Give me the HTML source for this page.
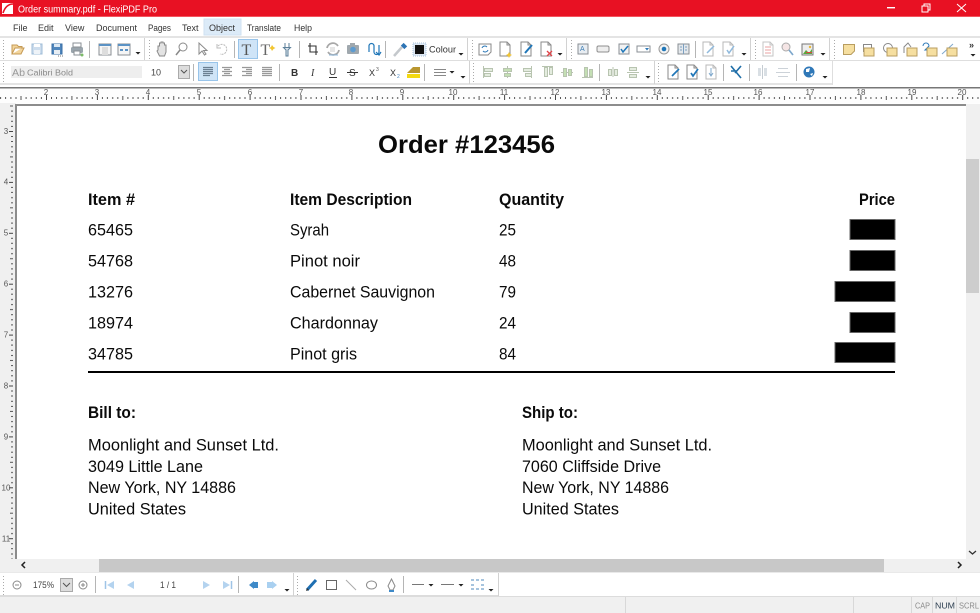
<!DOCTYPE html>
<html><head><meta charset="utf-8"><style>
html,body{margin:0;padding:0;background:#fff}
#a{position:relative;width:980px;height:613px;overflow:hidden;background:#fff;font-family:"Liberation Sans",sans-serif}
svg{position:absolute;left:0;top:0}
.ui{font-family:"Liberation Sans",sans-serif;font-size:9px;fill:#333}
.doc{font-family:"Liberation Sans",sans-serif;font-size:16.5px;fill:#0a0a0a}
.b{font-weight:bold}
.r{font-family:"Liberation Sans",sans-serif;font-size:8px;fill:#555}
.g{fill:none;stroke:#8a8a8a;stroke-width:1}
.m{fill:none;stroke:#1f76b8;stroke-width:1.2}
.y{fill:#f6dfa0;stroke:#b89d60;stroke-width:1}
</style></head><body><div id="a">
<svg width="980" height="613" viewBox="0 0 980 613">
<defs>
<pattern id="hr" x="46" y="94" width="50.9" height="9" patternUnits="userSpaceOnUse">
<rect x="0" y="1" width="1" height="5" fill="#444"/><rect x="5" y="3" width="1" height="2" fill="#555"/><rect x="10" y="3" width="1" height="2" fill="#555"/><rect x="15.3" y="3" width="1" height="2" fill="#555"/><rect x="20.4" y="3" width="1" height="2" fill="#555"/><rect x="25.4" y="2" width="1" height="4" fill="#555"/><rect x="30.5" y="3" width="1" height="2" fill="#555"/><rect x="35.6" y="3" width="1" height="2" fill="#555"/><rect x="40.7" y="3" width="1" height="2" fill="#555"/><rect x="45.8" y="3" width="1" height="2" fill="#555"/>
</pattern>
<pattern id="vr" x="8" y="131" width="7" height="50.9" patternUnits="userSpaceOnUse">
<rect x="1" y="0" width="4" height="1" fill="#444"/><rect x="3" y="5" width="2" height="1" fill="#555"/><rect x="3" y="10" width="2" height="1" fill="#555"/><rect x="3" y="15.3" width="2" height="1" fill="#555"/><rect x="3" y="20.4" width="2" height="1" fill="#555"/><rect x="2" y="25.4" width="3" height="1" fill="#555"/><rect x="3" y="30.5" width="2" height="1" fill="#555"/><rect x="3" y="35.6" width="2" height="1" fill="#555"/><rect x="3" y="40.7" width="2" height="1" fill="#555"/><rect x="3" y="45.8" width="2" height="1" fill="#555"/>
</pattern>
<g id="doc"><path class="g" d="M-5 -7H2L5 -4V7H-5Z"/><path class="g" d="M2 -7V-4H5"/></g>
<g id="grip"><path d="M0 -9V10" stroke="#aaa" stroke-width="1" stroke-dasharray="1 2"/></g>
<g id="arr"><path d="M-2.500 0H2.500L0 2.500Z" fill="#222"/></g>
<g id="note"><rect x="-5" y="-2" width="10" height="8" class="y"/></g>
</defs>

<!-- title bar -->
<rect width="980" height="16" fill="#e81123"/>
<rect y="16" width="980" height="1" fill="#f4555f"/>
<rect x="2" y="3" width="11" height="11" fill="#fff"/>
<path d="M3 13C5 7 8 4 13 4" stroke="#e81123" stroke-width="1.600" fill="none"/>
<text x="18" y="12.500" font-size="10" fill="#fff" font-family="Liberation Sans" textLength="139" lengthAdjust="spacingAndGlyphs">Order summary.pdf - FlexiPDF Pro</text>
<rect x="887" y="7" width="8" height="1.400" fill="#fff"/>
<rect x="922" y="6" width="6" height="6" fill="none" stroke="#fff"/><path d="M924 6V4H930V10H928" fill="none" stroke="#fff"/>
<path d="M957 4L966 12M966 4L957 12" stroke="#fff" stroke-width="1"/>

<!-- menu -->
<rect x="204" y="19" width="37" height="16" fill="#dcebf8" stroke="#cfe2f2"/>
<g class="ui">
<text x="13" y="31">File</text><text x="38" y="31">Edit</text><text x="65" y="31">View</text>
<text x="96" y="31" textLength="41" lengthAdjust="spacingAndGlyphs">Document</text><text x="148" y="31" textLength="23" lengthAdjust="spacingAndGlyphs">Pages</text><text x="182" y="31">Text</text>
<text x="209" y="31" textLength="26" lengthAdjust="spacingAndGlyphs">Object</text><text x="247" y="31" textLength="34" lengthAdjust="spacingAndGlyphs">Translate</text><text x="294" y="31" textLength="18" lengthAdjust="spacingAndGlyphs">Help</text>
</g>

<!-- toolbar lines -->
<rect x="0" y="36" width="980" height="2" fill="#e4e4e4"/>
<rect x="0" y="60" width="980" height="1" fill="#dedede"/>
<rect x="0" y="83" width="832" height="2" fill="#e4e4e4"/>
<rect x="832" y="61" width="1" height="24" fill="#dedede"/>
<path d="M144.500 38V60M467.500 38V60M566.500 38V60M750.500 38V60M829.500 38V60M469.500 61V84M654.500 61V84" stroke="#d2d2d2"/>
<use href="#grip" x="3.500" y="49"/><use href="#grip" x="149.500" y="49"/><use href="#grip" x="472.500" y="49"/><use href="#grip" x="571.500" y="49"/><use href="#grip" x="755.500" y="49"/><use href="#grip" x="834.500" y="49"/>
<use href="#grip" x="3.500" y="72"/><use href="#grip" x="473.500" y="72"/><use href="#grip" x="658.500" y="72"/>
<path d="M89.500 41V58M234.500 41V58M299.500 41V58M385.500 41V58M695.500 41V58M193.500 64V81M279.500 64V81M424.500 64V81M599.500 64V81M723.500 64V81M749.500 64V81M796.500 64V81" stroke="#b5b5b5"/>

<!-- toolbar 1 icons -->
<path d="M12 54V45H17L18.500 46.500H22V48H15L12 54H21L24 48H22" fill="#f3d59c" stroke="#c59a55"/>
<g transform="translate(37,49)"><rect x="-5" y="-5" width="10" height="10" fill="#cddded" stroke="#9fbcd7"/><rect x="-3" y="-5" width="6" height="3" fill="#fff"/><rect x="-3" y="1" width="6" height="4" fill="#eef3f8"/></g>
<g transform="translate(57,49)"><rect x="-5" y="-5" width="10" height="10" fill="#4f86bc" stroke="#3a6fa6"/><rect x="-3" y="-5" width="6" height="3" fill="#dbe8f3"/><rect x="-3" y="1" width="6" height="4" fill="#e8eef4"/><path d="M1 7H7" stroke="#777" stroke-dasharray="1 1"/></g>
<g transform="translate(77,49)"><rect x="-6" y="-2" width="12" height="6" rx="1.500" fill="#9aa5ad"/><rect x="-4" y="-6" width="8" height="4" fill="#fff" stroke="#8a8f94"/><rect x="-3" y="2" width="6" height="4" fill="#fff" stroke="#8a8f94"/><circle cx="5" cy="6" r="1.500" fill="#7dbb6a"/></g>
<g transform="translate(105,49)"><rect x="-6" y="-5" width="12" height="11" fill="#f5f5f5" stroke="#8a8f94"/><rect x="-6" y="-5" width="12" height="2" fill="#5b92c4"/><rect x="-3" y="-2" width="6" height="8" fill="#ddd"/></g>
<g transform="translate(124,49)"><rect x="-6" y="-5" width="12" height="11" fill="#f5f5f5" stroke="#8a8f94"/><rect x="-6" y="-5" width="12" height="2" fill="#5b92c4"/><path d="M-4 1H-1M1 1H4" stroke="#5b92c4" stroke-width="2"/></g>
<use href="#arr" x="138" y="52"/>
<g transform="translate(162,49)"><path d="M-4 1V-3H-2.500V-6H-1V-7H1V-6H2.500V-4H4V3L2.500 7H-2.500L-5 2Z" fill="#e3e3e3" stroke="#8a8a8a"/></g>
<g transform="translate(182,49)"><circle cx="1" cy="-2" r="4" class="g"/><path d="M-2 1L-6 6" stroke="#888" stroke-width="1.500"/></g>
<path d="M199 43V54L202 51L204.500 55L206 54L203.500 50.500H207Z" class="g"/>
<path d="M218 46A5 5 0 1 1 220 54" stroke="#bbb" fill="none" stroke-dasharray="2 1"/><path d="M217 44V48H221" stroke="#bbb" fill="none"/>
<rect x="238.500" y="39.500" width="19" height="19" fill="#cfe4f7" stroke="#98c4ea"/>
<text x="241.500" y="55" font-family="Liberation Serif" font-size="16" fill="#555">T</text>
<text x="260.500" y="55" font-family="Liberation Serif" font-size="16" fill="#666">T</text><path d="M272 45l1.500 2 2 1-2 1-1.500 2-1-2-2-1 2-1Z" fill="#f2c530"/>
<path d="M285 43V47M289 43V47M283.500 47.500H290.500L288 50V56H286V50Z" fill="#dfe8ef" stroke="#5c7f99"/>
<path d="M310 43V52H318M308 46H316V55" stroke="#333" fill="none" stroke-width="1.100"/>
<path d="M327 48A6 6 0 0 1 338 46M339 50A6 6 0 0 1 328 52" stroke="#a8a8a8" stroke-width="1.800" fill="none"/><rect x="330" y="47" width="5" height="5" fill="#e6e6e6"/><path d="M329 55H338" stroke="#8fb9dc"/>
<g transform="translate(353,49)"><rect x="-6" y="-4" width="12" height="9" rx="1" fill="#a0a8ae"/><rect x="-3" y="-6" width="5" height="2" fill="#a0a8ae"/><circle cy="0.500" r="2.800" fill="#5d9bd0"/></g>
<path d="M369 52V46A2.500 2.500 0 0 1 374 46V52A2.500 2.500 0 0 0 379 52V45" class="m"/><path d="M376 52L379 55L381 52" class="m" stroke-width="1"/>
<path d="M394 56L402 47" stroke="#c4c8cc" stroke-width="2.500"/><rect x="401.500" y="44" width="5" height="4" fill="#2d74b4" transform="rotate(45 404 46)"/>
<rect x="413" y="43" width="13" height="13" fill="#dfe9f4" stroke="#a9c4de" stroke-dasharray="1 1"/><rect x="415" y="45" width="9" height="9" fill="#111"/>
<text x="429" y="52.500" font-size="9" fill="#333" font-family="Liberation Sans" textLength="27" lengthAdjust="spacingAndGlyphs">Colour</text>
<use href="#arr" x="461" y="53"/>
<g transform="translate(485,49)"><path class="g" d="M-6 -5H6V3L3 6H-6Z"/><path d="M-3 -1A3 3 0 0 1 2 -2M3 1A3 3 0 0 1 -2 2" stroke="#2f7ab8" fill="none"/></g>
<use href="#doc" x="505" y="49"/><path d="M509 52l1 2 2 1-2 1-1 2-1-2-2-1 2-1Z" fill="#f2c530"/>
<use href="#doc" x="526" y="49"/><path d="M525 53L532 45" stroke="#1f76b8" stroke-width="2"/>
<use href="#doc" x="546" y="49"/><path d="M547 51L552 56M552 51L547 56" stroke="#e0454a" stroke-width="1.300"/>
<use href="#arr" x="560" y="53"/>
<g transform="translate(583,49)"><rect x="-5" y="-5" width="10" height="10" fill="#e8edf2" stroke="#8a8f94"/><text x="-3" y="2" font-size="7" fill="#3c7db4" font-family="Liberation Sans">A</text></g>
<rect x="597" y="46" width="12" height="6" rx="1.500" fill="#eee" stroke="#8f8f8f"/>
<g transform="translate(624,49)"><rect x="-5" y="-5" width="10" height="10" fill="#f2f2f2" stroke="#8a8f94"/><path d="M-3 0L-1 3L4 -3" stroke="#1f76b8" stroke-width="1.500" fill="none"/></g>
<rect x="637" y="46" width="13" height="6" fill="#fff" stroke="#8a8f94"/><path d="M645 48H649L647 50.500Z" fill="#2f7ab8"/>
<circle cx="664" cy="49" r="5" fill="#f2f2f2" stroke="#9a9a9a"/><circle cx="664" cy="49" r="2.300" fill="#1f76b8"/>
<rect x="678" y="44" width="11" height="10" fill="#e4e8ec" stroke="#8a8f94"/><path d="M683.500 44V54M680 47H682M680 50H682M685 47H687M685 50H687" stroke="#7b9fc0"/>
<use href="#doc" x="708" y="49" opacity=".6"/><path d="M707 53L714 46" stroke="#8fb9dc" stroke-width="1.500"/>
<use href="#doc" x="728" y="49" opacity=".6"/><path d="M727 50L729 53L734 46" stroke="#8fb9dc" stroke-width="1.500" fill="none"/>
<use href="#arr" x="744" y="53"/>
<use href="#doc" x="768" y="49" opacity=".5"/><path d="M765 47H771M765 50H771M765 53H771" stroke="#e9a0a0"/>
<circle cx="786" cy="47" r="4" fill="#f5e5e5" stroke="#aaa"/><path d="M789 50L793 55" stroke="#7fa8cc" stroke-width="1.700"/>
<rect x="802" y="44" width="11" height="11" fill="#eee" stroke="#777"/><path d="M803 54L806 50L809 53L812 49V54Z" fill="#58a83f"/><circle cx="810" cy="47" r="1.200" fill="#e8b93a"/><rect x="806" y="52" width="6" height="1" fill="#d9493f"/>
<use href="#arr" x="823" y="53"/>
<path d="M843.500 44.500H854.500V51L851 54.500H843.500Z" class="y"/>
<rect x="863.500" y="44.500" width="8" height="7" fill="#fff" stroke="#888"/><use href="#note" x="869" y="50"/>
<circle cx="888" cy="48" r="4.500" fill="#fff" stroke="#888"/><use href="#note" x="892" y="50"/>
<path d="M904 53V47L908 43L911 47" fill="none" stroke="#888"/><use href="#note" x="912" y="50"/>
<path d="M923 46A3 3 0 0 1 929 46L925 50H931" stroke="#2f7ab8" fill="none"/><use href="#note" x="932" y="50"/>
<path d="M942 54L953 44" stroke="#7fa8cc"/><use href="#note" x="952" y="50"/>
<text x="969" y="48" font-size="9" fill="#333" font-weight="bold" font-family="Liberation Sans">»</text>
<use href="#arr" x="973" y="54"/>

<!-- toolbar 2 -->
<rect x="11" y="66" width="131" height="12" fill="#eeeeee"/>
<text x="12" y="76" font-size="10" fill="#999" font-family="Liberation Sans" textLength="13" lengthAdjust="spacingAndGlyphs">Ab</text>
<text x="27" y="75.500" font-size="8.500" fill="#8a8a8a" font-family="Liberation Sans" textLength="46" lengthAdjust="spacingAndGlyphs">Calibri Bold</text>
<text x="151" y="75.500" font-size="9" fill="#444" font-family="Liberation Sans">10</text>
<rect x="178.500" y="65.500" width="11" height="13" fill="#ddd" stroke="#aaa"/><path d="M181 70L184 73L187 70" stroke="#555" fill="none"/>
<rect x="198.500" y="62.500" width="19" height="18" fill="#cfe4f7" stroke="#98c4ea"/>
<path d="M203 67.500H213M203 69.500H213M203 71.500H213M203 73.500H213M203 75.500H210" stroke="#6b7f92" stroke-width="1.300"/>
<path d="M222 67.500H232M224 69.500H230M222 71.500H232M224 73.500H230M222 75.500H232" stroke="#999" stroke-width="1.300"/>
<path d="M242 67.500H252M246 69.500H252M242 71.500H252M246 73.500H252M242 75.500H252" stroke="#999" stroke-width="1.300"/>
<path d="M262 67.500H272M262 69.500H272M262 71.500H272M262 73.500H272M262 75.500H272" stroke="#999" stroke-width="1.300"/>
<text x="291" y="76" font-size="10" font-weight="bold" fill="#333" font-family="Liberation Sans">B</text>
<text x="311" y="76" font-size="10" font-style="italic" fill="#333" font-family="Liberation Serif">I</text>
<text x="329" y="75" font-size="10" fill="#333" font-family="Liberation Sans">U</text><path d="M329 77.500H337" stroke="#333"/>
<text x="349" y="76" font-size="10" fill="#333" font-family="Liberation Sans">S</text><path d="M347 72.500H358" stroke="#333"/>
<text x="369" y="76" font-size="9" fill="#333" font-family="Liberation Sans">X</text><text x="376" y="71" font-size="5" fill="#555" font-family="Liberation Sans">3</text>
<text x="390" y="76" font-size="9" fill="#333" font-family="Liberation Sans">X</text><text x="397" y="78" font-size="5" fill="#4a88c0" font-family="Liberation Sans">2</text>
<path d="M407 73L413 67L420 67V73Z" fill="#b9962f"/><rect x="407" y="74" width="13" height="4" fill="#f3d911"/>
<path d="M434 69.500H446M434 72.500H446M434 75.500H446" stroke="#888"/>
<use href="#arr" x="452" y="71"/><use href="#arr" x="463" y="76"/>
<g fill="#e4ecdf" stroke="#b8c4b0">
<path d="M483.500 66V78" fill="none"/><rect x="484.500" y="68.500" width="8" height="3"/><rect x="484.500" y="73.500" width="6" height="3"/>
<path d="M507.500 66V78" fill="none"/><rect x="503.500" y="68.500" width="8" height="3" fill="#c4dfb4"/><rect x="504.500" y="73.500" width="6" height="3" fill="#c4dfb4"/>
<path d="M531.500 66V78" fill="none"/><rect x="523.500" y="68.500" width="8" height="3"/><rect x="525.500" y="73.500" width="6" height="3"/>
<path d="M542 66.500H553" fill="none"/><rect x="544.500" y="67.500" width="3" height="9"/><rect x="549.500" y="67.500" width="3" height="7"/>
<path d="M561 72.500H573" fill="none"/><rect x="563.500" y="68.500" width="3" height="8" fill="#c4dfb4"/><rect x="568.500" y="69.500" width="3" height="6" fill="#c4dfb4"/>
<path d="M582 77.500H593" fill="none"/><rect x="584.500" y="67.500" width="3" height="9" fill="#c4dfb4"/><rect x="589.500" y="69.500" width="3" height="7" fill="#c4dfb4"/>
<rect x="608.500" y="69.500" width="3" height="6"/><rect x="614.500" y="69.500" width="3" height="6"/><path d="M613 67V77" fill="none"/>
<rect x="629.500" y="67.500" width="7" height="3"/><rect x="629.500" y="74.500" width="7" height="3"/><path d="M627 72.500H639" fill="none"/>
</g>
<use href="#arr" x="648" y="76"/>
<use href="#doc" x="673" y="72"/><path d="M672 76L679 69" stroke="#1f76b8" stroke-width="1.700"/>
<use href="#doc" x="692" y="72"/><path d="M691 73L693 76L698 69" stroke="#1f76b8" stroke-width="1.700" fill="none"/>
<use href="#doc" x="711" y="72" opacity=".6"/><path d="M711 68V75M709 73L711 76L713 73" stroke="#7fa8cc" fill="none"/>
<path d="M731 66L741 78M741 66L735 73M731 71H737" stroke="#1f6ea8" stroke-width="1.600" fill="none"/>
<rect x="758" y="68" width="3" height="8" fill="#d9dfe4"/><rect x="764" y="68" width="3" height="8" fill="#d9dfe4"/><path d="M762.500 65V79" stroke="#c5ccd2"/>
<path d="M778 68.500H788M776 72.500H790M778 76.500H788" stroke="#ccd2d8"/>
<circle cx="809" cy="72" r="5.500" fill="#2f78b8"/><path d="M806 69L810 68L809 72L806 72ZM810 74L813 73L812 76Z" fill="#fff"/>
<use href="#arr" x="825" y="76"/>

<!-- ruler -->
<rect x="0" y="87" width="980" height="1.500" fill="#777"/>
<rect x="0" y="88.500" width="980" height="15" fill="#fdfdfd"/>
<rect x="0" y="94" width="980" height="9" fill="url(#hr)"/>
<g class="r" text-anchor="middle">
<text x="46" y="95">2</text><text x="97" y="95">3</text><text x="148" y="95">4</text><text x="199" y="95">5</text><text x="250" y="95">6</text><text x="301" y="95">7</text><text x="351" y="95">8</text><text x="402" y="95">9</text><text x="453" y="95">10</text><text x="504" y="95">11</text><text x="555" y="95">12</text><text x="606" y="95">13</text><text x="657" y="95">14</text><text x="708" y="95">15</text><text x="758" y="95">16</text><text x="810" y="95">17</text><text x="861" y="95">18</text><text x="912" y="95">19</text><text x="962" y="95">20</text>
</g>
<rect x="0" y="103" width="16" height="456" fill="#f0f0f0"/>
<rect x="8" y="104" width="7" height="455" fill="url(#vr)"/>
<g class="r" text-anchor="middle">
<text x="6" y="134">3</text><text x="6" y="184.500">4</text><text x="6" y="235.500">5</text><text x="6" y="286.500">6</text><text x="6" y="337.500">7</text><text x="6" y="388.500">8</text><text x="6" y="439.500">9</text><text x="6" y="490.500">10</text><text x="6" y="541.500">11</text>
</g>
<rect x="15" y="104" width="951" height="2" fill="#8c8c8c"/>
<rect x="15" y="104" width="2" height="455" fill="#8c8c8c"/>

<!-- document -->
<text x="378" y="153" class="doc b" style="font-size:25px" textLength="177" lengthAdjust="spacingAndGlyphs">Order #123456</text>
<g class="doc b">
<text x="88" y="205" textLength="47" lengthAdjust="spacingAndGlyphs">Item #</text>
<text x="290" y="205" textLength="122" lengthAdjust="spacingAndGlyphs">Item Description</text>
<text x="499" y="205" textLength="65" lengthAdjust="spacingAndGlyphs">Quantity</text>
<text x="859" y="205" textLength="36" lengthAdjust="spacingAndGlyphs">Price</text>
<text x="88" y="418" textLength="48" lengthAdjust="spacingAndGlyphs">Bill to:</text>
<text x="522" y="418" textLength="56" lengthAdjust="spacingAndGlyphs">Ship to:</text>
</g>
<g class="doc">
<text x="88" y="235.500" textLength="45" lengthAdjust="spacingAndGlyphs">65465</text><text x="290" y="235.500" textLength="39" lengthAdjust="spacingAndGlyphs">Syrah</text><text x="499" y="235.500" textLength="17" lengthAdjust="spacingAndGlyphs">25</text>
<text x="88" y="266.500" textLength="45" lengthAdjust="spacingAndGlyphs">54768</text><text x="290" y="266.500" textLength="70" lengthAdjust="spacingAndGlyphs">Pinot noir</text><text x="499" y="266.500" textLength="17" lengthAdjust="spacingAndGlyphs">48</text>
<text x="88" y="297.500" textLength="45" lengthAdjust="spacingAndGlyphs">13276</text><text x="290" y="297.500" textLength="145" lengthAdjust="spacingAndGlyphs">Cabernet Sauvignon</text><text x="499" y="297.500" textLength="17" lengthAdjust="spacingAndGlyphs">79</text>
<text x="88" y="328.500" textLength="45" lengthAdjust="spacingAndGlyphs">18974</text><text x="290" y="328.500" textLength="88" lengthAdjust="spacingAndGlyphs">Chardonnay</text><text x="499" y="328.500" textLength="17" lengthAdjust="spacingAndGlyphs">24</text>
<text x="88" y="359.500" textLength="45" lengthAdjust="spacingAndGlyphs">34785</text><text x="290" y="359.500" textLength="67" lengthAdjust="spacingAndGlyphs">Pinot gris</text><text x="499" y="359.500" textLength="17" lengthAdjust="spacingAndGlyphs">84</text>
<text x="88" y="450.500" textLength="191" lengthAdjust="spacingAndGlyphs">Moonlight and Sunset Ltd.</text>
<text x="88" y="472" textLength="115" lengthAdjust="spacingAndGlyphs">3049 Little Lane</text>
<text x="88" y="493" textLength="148" lengthAdjust="spacingAndGlyphs">New York, NY 14886</text>
<text x="88" y="514.500" textLength="98" lengthAdjust="spacingAndGlyphs">United States</text>
<text x="522" y="450.500" textLength="190" lengthAdjust="spacingAndGlyphs">Moonlight and Sunset Ltd.</text>
<text x="522" y="472" textLength="139" lengthAdjust="spacingAndGlyphs">7060 Cliffside Drive</text>
<text x="522" y="493" textLength="147" lengthAdjust="spacingAndGlyphs">New York, NY 14886</text>
<text x="522" y="514.500" textLength="97" lengthAdjust="spacingAndGlyphs">United States</text>
</g>
<g fill="#000" stroke="#666" stroke-width="1">
<rect x="850" y="219.500" width="45" height="20"/><rect x="850" y="250.500" width="45" height="20"/><rect x="835" y="281.500" width="60" height="20"/><rect x="850" y="312.500" width="45" height="20"/><rect x="835" y="342.500" width="60" height="20"/>
</g>
<rect x="88" y="371" width="807" height="2" fill="#000"/>

<!-- scrollbars -->
<rect x="966" y="104" width="14" height="468" fill="#f0f0f0"/>
<rect x="966" y="159" width="13" height="134" fill="#cdcdcd"/>
<path d="M969 551L972.500 554L976 551" stroke="#333" stroke-width="1.300" fill="none"/>
<rect x="0" y="559" width="980" height="13" fill="#f0f0f0"/>
<rect x="99" y="559" width="785" height="13" fill="#c8c8c8"/>
<path d="M25 562L22 565L25 568" stroke="#222" stroke-width="1.500" fill="none"/>
<path d="M958 562L961 565L958 568" stroke="#222" stroke-width="1.500" fill="none"/>
<rect x="0" y="572" width="980" height="1" fill="#e9e9e9"/>

<!-- bottom toolbar -->
<rect x="0" y="596" width="980" height="17" fill="#f0f0f0"/>
<rect x="0" y="596" width="980" height="1" fill="#dcdcdc"/>
<rect x="0" y="595" width="498" height="2" fill="#dcdcdc"/>
<path d="M293.500 573V596M498.500 573V596" stroke="#d2d2d2"/>
<use href="#grip" x="3.500" y="585"/><use href="#grip" x="297.500" y="585"/>
<path d="M95.500 576V593M238.500 576V593M403.500 576V593" stroke="#b5b5b5"/>
<circle cx="17" cy="585" r="4" class="g"/><path d="M15 585H19" stroke="#888"/>
<text x="33" y="588" font-size="9" fill="#444" font-family="Liberation Sans" textLength="21" lengthAdjust="spacingAndGlyphs">175%</text>
<rect x="60.500" y="578.500" width="12" height="13" fill="#ddd" stroke="#aaa"/><path d="M63 583L66.500 586.500L70 583" stroke="#555" fill="none"/>
<circle cx="83" cy="585" r="4" class="g"/><path d="M81 585H85M83 583V587" stroke="#888"/>
<path d="M105.500 581V589" stroke="#9fc4e6" stroke-width="1.500"/><path d="M114 581V589L107 585Z" fill="#b4d3ef"/>
<path d="M134 581V589L127 585Z" fill="#b4d3ef"/>
<text x="160" y="588" font-size="9" fill="#444" font-family="Liberation Sans" textLength="16" lengthAdjust="spacingAndGlyphs">1 / 1</text>
<path d="M203 581V589L210 585Z" fill="#b4d3ef"/>
<path d="M223 581V589L230 585Z" fill="#b4d3ef"/><path d="M231.500 581V589" stroke="#9fc4e6" stroke-width="1.500"/>
<path d="M249 585L254 581V589Z" fill="#3f8ac8"/><rect x="253" y="582" width="5" height="6" fill="#3f8ac8"/>
<path d="M277 585L272 581V589Z" fill="#a9d0f0"/><rect x="267" y="582" width="5" height="6" fill="#a9d0f0"/>
<use href="#arr" x="287" y="589"/>
<path d="M307 590L316 580" stroke="#1f6fb2" stroke-width="3"/><path d="M306 591L307 588L309 590Z" fill="#333"/>
<rect x="326.500" y="580.500" width="10" height="9" fill="none" stroke="#666"/>
<path d="M346 580L356 590" stroke="#aaa"/>
<ellipse cx="371.500" cy="585" rx="5" ry="4" class="g"/>
<path d="M391.500 579L395 586L393 590H390L388 586Z" class="g"/><rect x="389" y="590" width="5" height="2" fill="#3f8ac8"/>
<path d="M412 584.500H424M441 584.500H454" stroke="#777"/>
<use href="#arr" x="431" y="584"/><use href="#arr" x="461" y="584"/>
<g fill="#a6c4de"><rect x="471" y="579" width="3" height="2"/><rect x="476" y="579" width="3" height="2"/><rect x="481" y="579" width="3" height="2"/><rect x="471" y="584" width="3" height="2"/><rect x="481" y="584" width="3" height="2"/><rect x="471" y="588" width="3" height="2"/><rect x="476" y="588" width="3" height="2"/><rect x="481" y="588" width="3" height="2"/></g>
<use href="#arr" x="491" y="589"/>

<!-- status bar -->
<path d="M625.500 597V613M853.500 597V613M911.500 597V613M932.500 597V613M956.500 597V613" stroke="#d8d8d8"/>
<text x="915" y="608.500" font-size="8.500" fill="#8a8a8a" font-family="Liberation Sans" textLength="15" lengthAdjust="spacingAndGlyphs">CAP</text>
<text x="935" y="608.500" font-size="8.500" fill="#2c3e50" font-family="Liberation Sans" textLength="20" lengthAdjust="spacingAndGlyphs">NUM</text>
<text x="959" y="608.500" font-size="8.500" fill="#8a8a8a" font-family="Liberation Sans" textLength="20" lengthAdjust="spacingAndGlyphs">SCRL</text>
</svg>
</div></body></html>
